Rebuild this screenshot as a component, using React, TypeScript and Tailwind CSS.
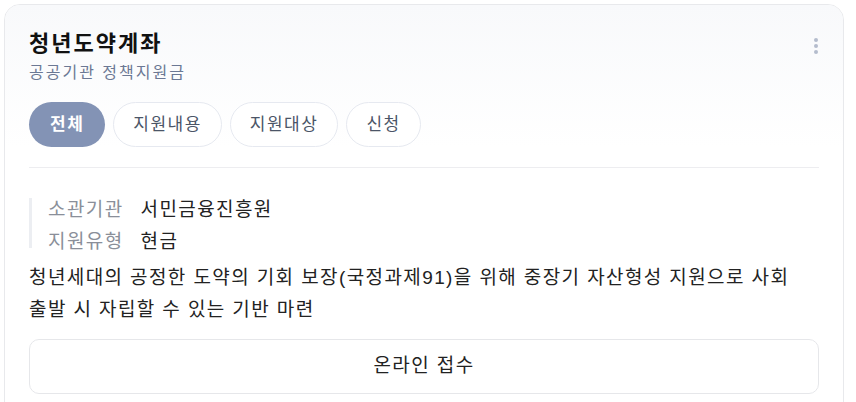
import React, { useState } from 'react';

const tabs = ['전체', '지원내용', '지원대상', '신청'];

const App = () => {
  const [activeTab, setActiveTab] = useState('전체');

  return (
    <div
      className="min-h-screen bg-white pl-1 pr-[12px] pt-1"
      style={{ fontFamily: '"Liberation Sans", "Noto Sans CJK KR", sans-serif' }}
    >
      {/* Card */}
      <div className="h-[420px] overflow-hidden rounded-[16px] border border-[#e8e9ec] bg-white">
        {/* Header */}
        <div className="bg-gradient-to-b from-[#f8f9fb] to-white px-6 pt-[23px]">
          <div className="flex items-start justify-between">
            <div>
              <h1 className="text-[22px] font-bold leading-[32px] tracking-[2px] text-[#111]">청년도약계좌</h1>
              <p className="mt-[3px] text-[16px] leading-[20px] tracking-[2px] text-[#6b7894]">공공기관 정책지원금</p>
            </div>
            <button className="mr-[1px] mt-[10px] flex flex-col gap-[2px]">
              <span className="h-[4px] w-[4px] rounded-full bg-[#b4bccd]" />
              <span className="h-[4px] w-[4px] rounded-full bg-[#b4bccd]" />
              <span className="h-[4px] w-[4px] rounded-full bg-[#b4bccd]" />
            </button>
          </div>

          {/* Tabs */}
          <div className="mt-[19px] flex gap-[8px]">
            {tabs.map(tab => (
              <button
                key={tab}
                onClick={() => setActiveTab(tab)}
                className={`h-[45px] rounded-full text-[17px] tracking-[1.5px] ${
                  activeTab === tab
                    ? 'bg-[#8393b5] px-[21px] font-bold text-white'
                    : 'border border-[#e6e9f0] bg-white px-[19px] text-[#4b5567]'
                }`}
              >
                {tab}
              </button>
            ))}
          </div>
        </div>

        {/* Body */}
        <div className="px-6">
          <div className="mt-[20px] h-px bg-[#ededf0]" />

          {/* Info */}
          <div className="mt-[26px] flex items-start">
            <div className="mt-[4px] h-[50px] w-[3px] bg-[#eceef2]" />
            <div className="pl-[16px] text-[19px] leading-[32px] tracking-[1.4px]">
              <div className="flex gap-[17px]">
                <span className="text-[#8a8f99]">소관기관</span>
                <span className="text-[#222]">서민금융진흥원</span>
              </div>
              <div className="flex gap-[17px]">
                <span className="text-[#8a8f99]">지원유형</span>
                <span className="text-[#222]">현금</span>
              </div>
            </div>
          </div>

          <p className="mt-[4px] break-keep text-[19px] leading-[32px] tracking-[1.4px] text-[#222]">
            청년세대의 공정한 도약의 기회 보장(국정과제91)을 위해 중장기 자산형성 지원으로 사회 출발 시 자립할 수 있는 기반 마련
          </p>

          <button className="mt-[13px] h-[55px] w-full rounded-[10px] border border-[#e6e7ea] text-[19px] tracking-[1.4px] text-[#222]">
            온라인 접수
          </button>
        </div>
      </div>
    </div>
  );
};

export default App;
